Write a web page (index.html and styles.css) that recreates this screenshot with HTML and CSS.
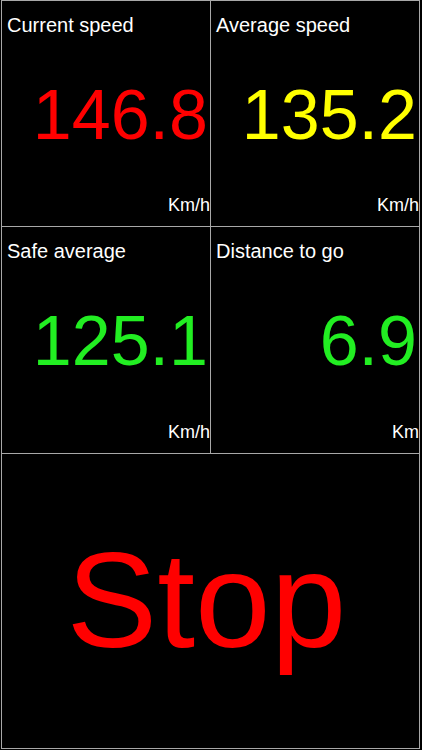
FILE: index.html
```html
<!DOCTYPE html>
<html lang="en">
<head>
  <meta charset="UTF-8">
  <title>Speed Monitor</title>
  <link rel="stylesheet" href="styles.css">
</head>
<body>
<div class="board">
  <div class="cell">
    <div class="label">Current speed</div>
    <div class="value red">146.8</div>
    <div class="unit">Km/h</div>
  </div>
  <div class="cell">
    <div class="label">Average speed</div>
    <div class="value yellow">135.2</div>
    <div class="unit">Km/h</div>
  </div>
  <div class="cell">
    <div class="label">Safe average</div>
    <div class="value green">125.1</div>
    <div class="unit">Km/h</div>
  </div>
  <div class="cell">
    <div class="label">Distance to go</div>
    <div class="value green">6.9</div>
    <div class="unit">Km</div>
  </div>
  <div class="status">Stop</div>
</div>
</body>
</html>
```

FILE: styles.css
```css
:root {
  --line: #a8a8a8;
  --red: #ff0000;
  --yellow: #ffff00;
  --green: #22ee22;
  --font-family: 'Liberation Sans', 'Helvetica', 'Arial', sans-serif;
}

html, body {
  margin: 0;
  padding: 0;
  background-color: #000;
  font-family: var(--font-family);
}

.board {
  box-sizing: border-box;
  width: 419px;
  height: 749px;
  margin-left: 1px;
  padding: 1px;
  display: grid;
  grid-template-columns: 1fr 1fr;
  grid-template-rows: 225px 226px 1fr;
  gap: 1px;
  background-color: var(--line);
}

.cell {
  background-color: #000;
  display: flex;
  flex-direction: column;
  color: #fff;
}

.label {
  padding: 13px 0 0 5px;
  font-size: 20px;
  line-height: 23px;
}

.value {
  flex: 1;
  display: flex;
  align-items: center;
  justify-content: flex-end;
  padding-right: 2px;
  font-size: 70px;
  margin-top: -3px;
}

.unit {
  text-align: right;
  font-size: 18px;
  line-height: 20px;
  padding-bottom: 11px;
}

.red { color: var(--red); }
.yellow { color: var(--yellow); }
.green { color: var(--green); }

.status {
  grid-column: 1 / span 2;
  background-color: #000;
  color: var(--red);
  font-size: 136px;
  display: flex;
  align-items: center;
  justify-content: center;
  padding: 0 8px 2px 0;
}
```
